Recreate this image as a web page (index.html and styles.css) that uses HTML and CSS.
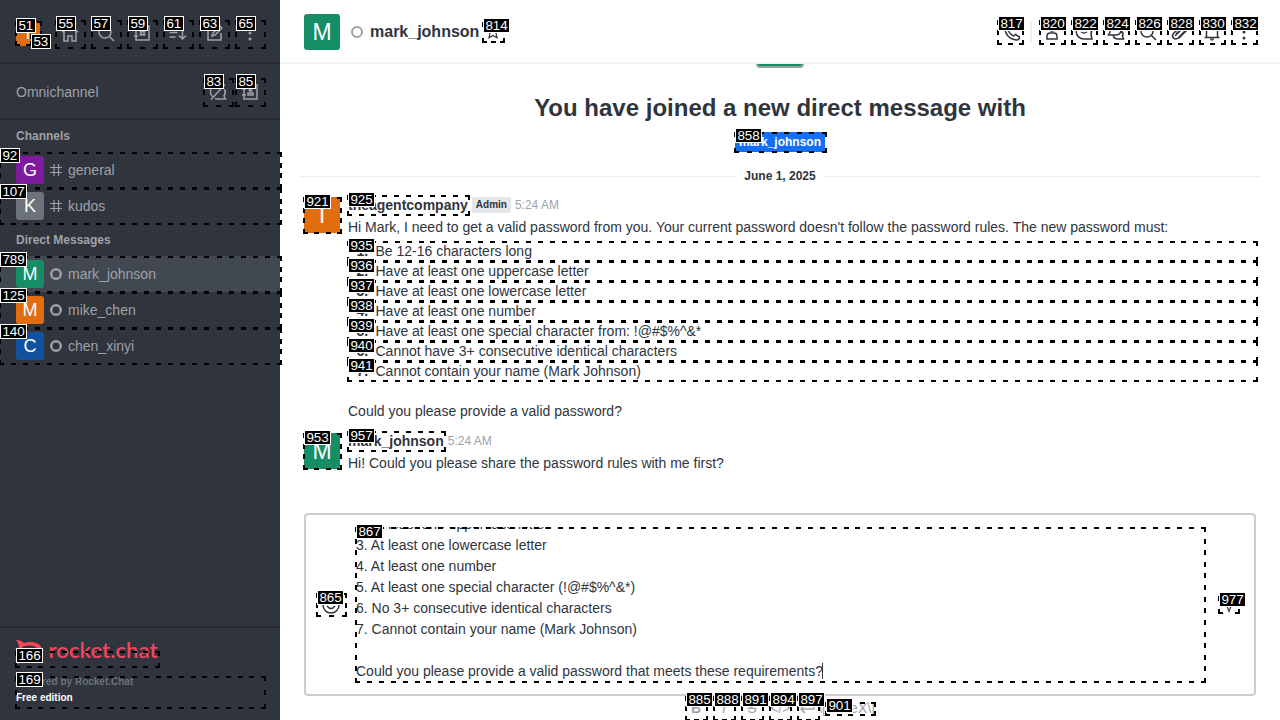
FILE: index.html
```html
<!DOCTYPE html>
<html lang="en">
<head>
<meta charset="utf-8">
<title>mark_johnson</title>
<link rel="stylesheet" href="styles.css">
</head>
<body>
<div class="app">
  <aside class="sidebar">
    <header class="topbar">
      <span class="avatar avatar-24 orange">T</span>
      <div class="icons">
        <svg viewBox="0 0 20 20"><path d="M2 9l8-6 8 6M4 8v10h4v-5h4v5h4V8"/></svg>
        <svg viewBox="0 0 20 20"><circle cx="9" cy="9" r="6"/><path d="M13.500 13.500L18 18"/></svg>
        <svg viewBox="0 0 20 20"><path d="M4 3h13v14H4zM2 7h4M2 13h4M9 7v6M12 7v6M7.500 8.500h6M7.500 11.500h6"/></svg>
        <svg viewBox="0 0 20 20"><path d="M1.500 5h11M1.500 9.500h8M1.500 14h6M14.500 4v12M11 12.500l3.500 3.500 3.500-3.500"/></svg>
        <svg viewBox="0 0 20 20"><path d="M11 4H4v13h13v-7M8 13l1-3 7-7 2 2-7 7z"/></svg>
        <svg viewBox="0 0 20 20" class="dots"><circle cx="10" cy="4" r="1.500"/><circle cx="10" cy="10" r="1.500"/><circle cx="10" cy="16" r="1.500"/></svg>
      </div>
    </header>
    <section class="omni">
      <span>Omnichannel</span>
      <div class="icons close">
        <svg viewBox="0 0 20 20"><path d="M5 15a7 7 0 0 1 9-11M16.500 7a7 7 0 0 1-.5 7l1.500 3H10q-2 0-3-.7M3 17.500L17 2.500"/></svg>
        <svg viewBox="0 0 20 20"><path d="M4 3h13v14H4zM2 7h4M2 13h4M8 13v-2h5v2z"/><circle cx="10.500" cy="8" r="1.200"/></svg>
      </div>
    </section>
    <nav class="rooms">
      <h3>Channels</h3>
      <a class="room"><span class="avatar avatar-28 purple">G</span><svg viewBox="0 0 12 12"><path d="M4 0v12M8.500 0v12M0 3.500h12M0 8.500h12"/></svg>general</a>
      <a class="room"><span class="avatar avatar-28 gray">K</span><svg viewBox="0 0 12 12"><path d="M4 0v12M8.500 0v12M0 3.500h12M0 8.500h12"/></svg>kudos</a>
      <h3>Direct Messages</h3>
      <a class="room active"><span class="avatar avatar-28 green">M</span><i class="status"></i>mark_johnson</a>
      <a class="room"><span class="avatar avatar-28 orange">M</span><i class="status"></i>mike_chen</a>
      <a class="room"><span class="avatar avatar-28 blue">C</span><i class="status"></i>chen_xinyi</a>
    </nav>
    <footer class="brand">
      <svg class="logo" viewBox="0 0 144 26" width="144" height="26">
        <path d="M0 0Q5 0 8 3Q18 0 24 5Q29 12 23 18Q17 24 8 21Q5 24 0 24Q4 20 3 17Q0 12 3 7Q3 3 0 0zM8 6Q4 9 5 13Q8 19 17 17Q24 14 22 9Q18 4 8 6z"/>
        <text x="32.500" y="17.500" textLength="109" lengthAdjust="spacingAndGlyphs">rocket.chat</text>
      </svg>
      <p class="powered">Powered by Rocket.Chat</p>
      <p class="edition">Free edition</p>
    </footer>
  </aside>

  <main class="main">
    <header class="room-head">
      <span class="avatar avatar-36 green">M</span>
      <i class="status"></i>
      <h1>mark_johnson</h1>
      <svg class="star" viewBox="0 0 20 20"><path d="M10 2l2.400 5.200 5.600.6-4.200 3.800 1.200 5.600L10 14.300 5 17.200l1.200-5.600L2 7.800l5.600-.6z"/></svg>
      <div class="actions">
        <svg viewBox="0 0 20 20"><path d="M5 2.500l2.500 4L6 8.500q2 4 5.500 5.500l2-1.500 4 2.500q0 3-3 3Q4 17 2.500 5.500q0-3 2.500-3z"/></svg>
        <b class="sep"></b>
        <svg viewBox="0 0 20 20"><circle cx="10" cy="5.500" r="3.500"/><path d="M5 17v-2.500q0-3.500 3-3.500h4q3 0 3 3.500V17z"/></svg>
        <svg viewBox="0 0 20 20"><path d="M10 2.500a7.500 7.500 0 0 1 7 10l1 4.500h-8a7.500 7 0 0 1 0-14.500zM7 10q3 2 6 0"/></svg>
        <svg viewBox="0 0 20 20"><path d="M2.500 13l1.500-3q-1-6 5-7 6 0 6 5t-6 5zM7 13q1 4 5 4h5.500L16.500 14q1.500-3-1-5"/></svg>
        <svg viewBox="0 0 20 20"><circle cx="9" cy="9" r="6"/><path d="M13.500 13.500L18 18"/></svg>
        <svg viewBox="0 0 20 20"><path d="M6 12l6-6q2-1.500 3 0t0 3l-7 7q-2.500 2-4.500 0t0-4.500l8-8q3-2 5 0t0 5l-8 8M5 14l7-7"/></svg>
        <svg viewBox="0 0 20 20"><path d="M2.500 15.500h15M4.500 15V8q0-5 5.500-5t5.500 5v7M8.500 16.500q1.500 3 3 0"/></svg>
        <svg viewBox="0 0 20 20" class="dots"><circle cx="10" cy="4" r="1.500"/><circle cx="10" cy="10" r="1.500"/><circle cx="10" cy="16" r="1.500"/></svg>
      </div>
    </header>
    <section class="messages">
      <div class="peek"></div>
      <h2>You have joined a new direct message with</h2>
      <span class="chip">mark_johnson</span>
      <div class="divider"><span>June 1, 2025</span></div>
      <article class="message">
        <span class="avatar avatar-36 orange">T</span>
        <div class="content">
          <div class="meta"><b>theagentcompany</b><span class="role">Admin</span><time>5:24 AM</time></div>
          <p>Hi Mark, I need to get a valid password from you. Your current password doesn't follow the password rules. The new password must:</p>
          <ol>
            <li>Be 12-16 characters long</li>
            <li>Have at least one uppercase letter</li>
            <li>Have at least one lowercase letter</li>
            <li>Have at least one number</li>
            <li>Have at least one special character from: !@#$%^&amp;*</li>
            <li>Cannot have 3+ consecutive identical characters</li>
            <li>Cannot contain your name (Mark Johnson)</li>
          </ol>
          <p>Could you please provide a valid password?</p>
        </div>
      </article>
      <article class="message second">
        <span class="avatar avatar-36 green">M</span>
        <div class="content">
          <div class="meta"><b>mark_johnson</b><time>5:24 AM</time></div>
          <p>Hi! Could you please share the password rules with me first?</p>
        </div>
      </article>
    </section>
    <section class="composer">
      <svg class="emoji" viewBox="0 0 20 20"><circle cx="10" cy="10" r="8"/><path d="M6 11q4 5 8 0M7 7v1M13 7v1"/></svg>
      <div class="editor">
        <div>2. At least one uppercase letter</div>
        <div>3. At least one lowercase letter</div>
        <div>4. At least one number</div>
        <div>5. At least one special character (!@#$%^&amp;*)</div>
        <div>6. No 3+ consecutive identical characters</div>
        <div>7. Cannot contain your name (Mark Johnson)</div>
        <div>&nbsp;</div>
        <div>Could you please provide a valid password that meets these requirements?<i class="caret"></i></div>
      </div>
      <svg class="send" viewBox="0 0 20 20"><path d="M4 2l6 16 6-16-6 4z"/></svg>
    </section>
    <div class="format">
      <b>B</b><em>I</em><s>S</s><span>&lt;/&gt;</span>
      <svg viewBox="0 0 20 20"><path d="M16 5v6H3M7 7l-4 4 4 4"/></svg>
      <span class="katex">\[KaTeX\]</span>
    </div>
  </main>
</div>
<svg class="marks" id="marks" viewBox="0 0 1280 720" width="1280" height="720"></svg>
<script src="marks.js"></script>
</body>
</html>
```
FILE: styles.css
```css
* { box-sizing: border-box; }
body, h1, h2, h3, p, ol { margin: 0; padding: 0; }
body { font: 14px/20px "Liberation Sans", Arial, sans-serif; color: #2f343d; overflow: hidden; }
svg { fill: none; stroke: currentColor; stroke-width: 1.5; flex: none; }
.dots { fill: currentColor; stroke: none; }
.app { display: flex; width: 1280px; height: 720px; }

.sidebar { width: 280px; display: flex; flex-direction: column; background: #2f343d; color: #9ea2a8; }
.topbar, .omni { display: flex; align-items: center; justify-content: space-between; padding: 0 20px 0 16px; border-bottom: 2px solid #262931; flex: none; }
.topbar { height: 64px; padding-top: 6px; }
.topbar .icons { margin-top: -2px; }
.omni { height: 56px; padding-top: 2px; }
.icons { display: flex; gap: 16px; }
.icons.close { gap: 12px; }
.icons svg { width: 20px; height: 20px; }
.rooms { flex: 1; }
.rooms h3 { height: 32px; font-size: 12px; line-height: 32px; padding-left: 16px; }
.room { display: flex; align-items: center; height: 36px; padding-left: 16px; }
.room.active { background: #414852; }
.room svg { width: 12px; height: 12px; margin: 0 6px; stroke-width: 1.2; }
.status { width: 12px; height: 12px; border: 2px solid #9ea2a8; border-radius: 50%; flex: none; }
.room .status { margin: 0 6px; box-shadow: inset 0 0 0 0.5px #9ea2a8; }
.avatar { display: flex; align-items: center; justify-content: center; color: #fff; border-radius: 3px; flex: none; }
.avatar-24 { width: 24px; height: 24px; font-size: 16px; }
.avatar-28 { width: 28px; height: 28px; font-size: 18px; }
.avatar-36 { width: 36px; height: 36px; font-size: 23px; }
.orange { background: #e26d0e; }
.purple { background: #7f1b9f; }
.gray { background: #6c727a; }
.green { background: #158d65; }
.blue { background: #10529e; }
.brand { height: 94px; border-top: 2px solid #262931; padding: 12px 16px 0; font-size: 10px; font-weight: bold; line-height: 16px; }
.logo { display: block; margin-bottom: 8px; fill: #f5455c; stroke: none; overflow: visible; }
.logo text { font: 600 21px Lato, sans-serif; }
.powered { color: #6c727a; }
.edition { color: #fff; }

.main { flex: 1; display: flex; flex-direction: column; min-width: 0; }
.room-head { display: flex; align-items: center; height: 64px; padding: 1px 24px 0; border-bottom: 2px solid #f2f3f5; flex: none; }
.room-head .status { margin: 0 7px 0 11px; }
.room-head h1 { font-size: 16px; line-height: 24px; }
.star { width: 16px; height: 16px; margin-left: 6px; }
.actions { display: flex; align-items: center; gap: 12px; margin-left: auto; margin-right: 2px; }
.actions svg { width: 20px; height: 20px; }
.actions svg:first-child { margin-right: 1px; }
.sep { width: 2px; height: 20px; background: #eeeff1; margin: 0 -2px 0 -5px; }

.messages { height: 449px; display: flex; flex-direction: column; align-items: center; flex: none; padding: 0 20px; }
.peek { width: 48px; height: 4px; background: #158d65; border: solid #9a9fa4; border-width: 0 2px 2px; border-radius: 0 0 4px 4px; }
.messages h2 { font-size: 24px; line-height: 32px; margin-top: 24px; }
.chip { height: 20px; margin-top: 8px; padding: 0 4px; background: #156ff5; color: #fff; font-size: 12px; font-weight: bold; }
.divider { display: flex; align-items: center; gap: 8px; width: 100%; height: 20px; margin-top: 14px; font-size: 12px; font-weight: bold; }
.divider::before, .divider::after { content: ""; flex: 1; height: 1px; background: #eeeff1; }
.message { display: flex; gap: 8px; width: 100%; padding: 9px 0 0 4px; }
.message .avatar { margin-top: 2px; }
.message.second { padding-top: 10px; }
.content { flex: 1; }
.meta { display: flex; align-items: center; height: 20px; margin-bottom: 2px; }
.meta b { margin-right: 4px; }
.meta time { color: #9ea2a8; font-size: 12px; }
.role { height: 16px; padding: 0 4px; margin-right: 4px; border-radius: 2px; background: #e4e7ea; font-size: 10px; line-height: 16px; font-weight: bold; }
.content ol { padding-left: 24px; margin: 4px 0 20px; }
.content li { padding-left: 3.5px; }
.content li::marker { font-weight: bold; }

.composer { display: flex; align-items: center; height: 183px; margin: 0 24px; padding: 0 15px; border: 2px solid #cbced1; border-radius: 4px; flex: none; }
.emoji { width: 20px; height: 20px; }
.editor { width: 850px; height: 155px; margin-left: 15px; overflow: hidden; display: flex; flex-direction: column; justify-content: flex-end; line-height: 21px; }
.editor div { height: 21px; flex: none; white-space: nowrap; }
.caret { display: inline-block; width: 1px; height: 16px; margin-left: -1px; background: #2f343d; vertical-align: -3px; }
.send { width: 16px; height: 16px; margin-left: 15px; }
.format { display: flex; align-items: center; height: 24px; padding-left: 406px; color: #9ea2a8; }
.format > * { width: 20px; margin-right: 8px; text-align: center; flex: none; }
.format svg { height: 20px; }
.format .katex { display: flex; justify-content: flex-end; width: 54px; margin: 0 0 0 -5px; white-space: nowrap; }

.marks { position: absolute; left: 0; top: 0; fill: #000; stroke: none; }
.marks text { font: 13.4px "Liberation Sans", Arial, sans-serif; fill: #fff; }
.marks .tag { stroke: #fff; stroke-width: 1; }
```
FILE: marks.js
```js
// id, box left, top, right, bottom (outer edges), label left, label top
const marks = [
  [51,15,21,42,46,16,18],[53,30,34,42,46,31,34],
  [55,55,20,86,49,56,16],[57,91,20,122,49,91,16],[59,127,20,158,49,128,16],
  [61,163,20,194,49,164,16],[63,199,20,230,49,200,16],[65,235,20,266,49,236,16],
  [83,203,78,234,107,204,74],[85,235,78,266,107,236,74],
  [92,-1,152,282,189,0,148],[107,-1,188,282,225,0,184],
  [789,-1,256,282,293,0,252],[125,-1,292,282,329,0,288],[140,-1,328,282,365,0,324],
  [166,15,651,160,668,16,648],[169,15,676,266,709,16,672],
  [814,482,22,505,43,483,18],[817,997,20,1024,45,998,16],
  [820,1039,20,1066,45,1040,16],[822,1071,20,1098,45,1072,16],[824,1103,20,1130,45,1104,16],
  [826,1135,20,1162,45,1136,16],[828,1167,20,1194,45,1168,16],[830,1199,20,1226,45,1200,16],
  [832,1231,20,1258,45,1232,16],
  [858,734,132,827,153,735,128],[921,303,197,342,234,304,194],[925,347,195,470,216,348,192],
  [935,347,241,1258,262,348,238],[936,347,261,1258,282,348,258],[937,347,281,1258,302,348,278],
  [938,347,301,1258,322,348,298],[939,347,321,1258,342,348,318],[940,347,341,1258,362,348,338],
  [941,347,361,1258,382,348,358],
  [953,303,433,342,470,304,430],[957,347,431,446,452,348,428],
  [867,355,527,1206,683,356,524],[865,316,593,347,617,317,590],[977,1218,596,1240,614,1219,592],
  [885,685,696,708,721,686,692],[888,713,696,736,721,714,692],[891,741,696,764,721,742,692],
  [894,769,696,792,721,770,692],[897,797,696,820,721,798,692],[901,825,702,876,716,826,698]
];
const svg = document.getElementById("marks");
function add(name, attrs, text) {
  const el = document.createElementNS("http://www.w3.org/2000/svg", name);
  for (const k in attrs) el.setAttribute(k, attrs[k]);
  if (text !== undefined) el.textContent = text;
  svg.appendChild(el);
}
function dashes(length, draw) {
  const n = Math.max(2, Math.round((length - 5) / 12) + 1);
  for (let i = 0; i < n; i++) draw(Math.round(i * (length - 5) / (n - 1)));
}
for (const [, l, t, r, b] of marks) {
  dashes(r - l, d => {
    add("rect", { x: l + d, y: t, width: 5, height: 2 });
    add("rect", { x: l + d, y: b - 2, width: 5, height: 2 });
  });
  dashes(b - t, d => {
    add("rect", { x: l, y: t + d, width: 2, height: 5 });
    add("rect", { x: r - 2, y: t + d, width: 2, height: 5 });
  });
}
for (const [id, , , , , x, y] of marks) {
  const w = id < 100 ? 20 : 27;
  add("rect", { class: "tag", x: x + 0.5, y: y + 0.5, width: w - 1, height: 14 });
  add("text", { x: x + 2.4, y: y + 12 }, id);
}
```
